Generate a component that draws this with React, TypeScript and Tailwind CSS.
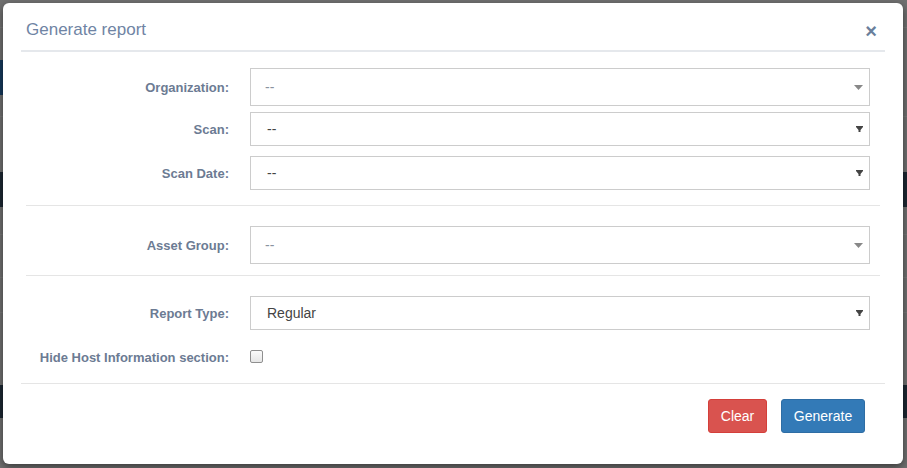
import React from 'react';

const FONT = { fontFamily: '"Liberation Sans", Arial, sans-serif' };

// Select2-style caret (light gray, flat triangle)
const Select2Caret = () => (
    <svg width="9" height="5" viewBox="0 0 9 5" className="shrink-0">
        <polygon points="0,0 9,0 4.5,5" fill="#888888" />
    </svg>
);

// Native select caret (darker, with small stem)
const NativeCaret = () => (
    <svg width="7" height="6" viewBox="0 0 7 6" className="shrink-0">
        <polygon points="0,0 7,0 7,1 4.5,4 4.5,6 2.5,6 2.5,4 0,1" fill="#444444" />
    </svg>
);

function FormRow({ label, children, height }: { label: string; children: React.ReactNode; height: string }) {
    return (
        <div className={`flex items-center ${height}`}>
            <label className="mt-[1px] w-[203px] shrink-0 text-right text-[13px] font-bold text-[#6c7b93]">{label}</label>
            <div className="ml-[21px] flex h-full items-center">{children}</div>
        </div>
    );
}

function FakeSelect({ value, select2, height }: { value: string; select2?: boolean; height: string }) {
    return (
        <div className={`flex w-[620px] ${height} items-center justify-between border border-[#cccccc] bg-white ${select2 ? 'pl-[14px] pr-[6px]' : 'pl-[16px] pr-[6px]'}`}>
            <span className={`text-[14px] ${select2 ? 'text-[#8a93a0]' : 'text-[#444444]'}`}>{value}</span>
            {select2 ? <Select2Caret /> : <NativeCaret />}
        </div>
    );
}

export default function App() {
    return (
        <div className="relative h-[468px] w-[907px] overflow-hidden bg-[#717171]" style={FONT}>
            {/* page behind the backdrop */}
            <div className="flex h-full flex-col">
                <div className="h-[28px] border-b border-[#7a7a7a]" />
                <div className="h-[32px]" />
                <div className="h-[35px] w-[40px] bg-[#163a5c]" />
                <div className="h-[22px] border-b border-[#7a7a7a]" />
                <div className="h-[55px]" />
                <div className="h-[35px] bg-[#1d2833]" />
                <div className="h-[28px] border-b border-[#7a7a7a]" />
                <div className="h-[43px] border-b border-[#7a7a7a]" />
                <div className="h-[35px] border-b border-[#7a7a7a]" />
                <div className="h-[72px]" />
                <div className="h-[33px] bg-[#1d2833]" />
                <div className="flex-1" />
            </div>

            {/* modal */}
            <div className="absolute left-[3px] top-[3px] flex h-[461px] w-[900px] flex-col rounded-[6px] bg-white shadow-[0_3px_9px_rgba(0,0,0,0.5)]">
                {/* header */}
                <div className="mx-[18px] flex items-center justify-between border-b-2 border-[#e5e8ec] pb-[8px] pl-[5px] pr-[8px] pt-[15px]">
                    <h4 className="text-[17px] leading-[24px] text-[#6f84a4]">Generate report</h4>
                    <button className="mt-[2px] text-[20px] font-bold leading-none text-[#6a7f9c]">×</button>
                </div>

                {/* body */}
                <div className="flex flex-col pt-[16px]">
                    <div className="px-[23px]">
                        <FormRow label="Organization:" height="h-[38px]">
                            <FakeSelect value="--" select2 height="h-[38px]" />
                        </FormRow>
                        <div className="mt-[6px]">
                            <FormRow label="Scan:" height="h-[34px]">
                                <FakeSelect value="--" height="h-[34px]" />
                            </FormRow>
                        </div>
                        <div className="mt-[10px]">
                            <FormRow label="Scan Date:" height="h-[34px]">
                                <FakeSelect value="--" height="h-[34px]" />
                            </FormRow>
                        </div>
                    </div>

                    <div className="mx-[23px] mt-[15px] border-t border-[#e5e5e5]" />

                    <div className="mt-[20px] px-[23px]">
                        <FormRow label="Asset Group:" height="h-[38px]">
                            <FakeSelect value="--" select2 height="h-[38px]" />
                        </FormRow>
                    </div>

                    <div className="mx-[23px] mt-[11px] border-t border-[#e5e5e5]" />

                    <div className="mt-[20px] px-[23px]">
                        <FormRow label="Report Type:" height="h-[34px]">
                            <FakeSelect value="Regular" height="h-[34px]" />
                        </FormRow>
                        <div className="mt-[17px]">
                            <FormRow label="Hide Host Information section:" height="h-[20px]">
                                <span className="mt-[-1px] block h-[13px] w-[13px] rounded-[2px] border border-[#8f8f8f] bg-gradient-to-b from-[#fbfbfb] to-[#e6e6e6]" />
                            </FormRow>
                        </div>
                    </div>
                </div>

                {/* footer */}
                <div className="mx-[18px] mt-[16px] flex justify-end gap-[14px] border-t border-[#e5e5e5] pr-[20px] pt-[15px]">
                    <button className="h-[34px] w-[59px] rounded-[3px] border border-[#d43f3a] bg-[#d9534f] text-[14px] text-white">
                        Clear
                    </button>
                    <button className="h-[34px] w-[84px] rounded-[3px] border border-[#2e6da4] bg-[#337ab7] text-[14px] text-white">
                        Generate
                    </button>
                </div>
            </div>
        </div>
    );
}
